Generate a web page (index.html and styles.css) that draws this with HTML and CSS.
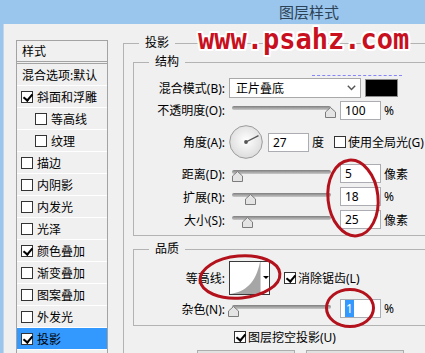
FILE: index.html
```html
<!DOCTYPE html>
<html lang="zh-CN">
<head>
    <meta charset="UTF-8" />
    <title>图层样式</title>
    <link rel="stylesheet" href="styles.css">
</head>
<body>

<div class="window">
    <div class="title">图层样式</div>

    <div class="content">
        <!-- Lista de estilos -->
        <ul class="styles-list">
            <li class="list-head">样式</li>
            <li class="blend-opt">混合选项:默认</li>
            <li><span class="check on"></span>斜面和浮雕</li>
            <li class="sub"><span class="check"></span>等高线</li>
            <li class="sub"><span class="check"></span>纹理</li>
            <li><span class="check"></span>描边</li>
            <li><span class="check"></span>内阴影</li>
            <li><span class="check"></span>内发光</li>
            <li><span class="check"></span>光泽</li>
            <li><span class="check on"></span>颜色叠加</li>
            <li><span class="check"></span>渐变叠加</li>
            <li><span class="check"></span>图案叠加</li>
            <li><span class="check"></span>外发光</li>
            <li class="selected"><span class="check on"></span>投影</li>
        </ul>

        <div class="panel">
            <fieldset class="group-outer">
                <legend>投影</legend>

                <fieldset class="group-inner">
                    <legend>结构</legend>
                    <div class="rows struct">
                        <div class="row r-blend">
                            <label>混合模式(B):</label>
                            <div class="select">
                                <span>正片叠底</span>
                                <svg width="9" height="6" viewBox="0 0 9 6"><polyline points="0.8,0.8 4.5,4.6 8.2,0.8" fill="none" stroke="#555" stroke-width="1.4"/></svg>
                            </div>
                            <span class="swatch"></span>
                        </div>
                        <div class="row r-opacity">
                            <label>不透明度(O):</label>
                            <div class="slider">
                                <div class="track"></div>
                                <svg class="thumb" style="left: 99%" width="11" height="11" viewBox="0 0 11 11"><path d="M0.5 5 L5.5 0.5 L10.5 5 V10.5 H0.5 Z" fill="#e4e4e4" stroke="#7c7c7c"/></svg>
                            </div>
                            <span class="num">100</span>
                            <span class="unit">%</span>
                        </div>
                        <div class="row r-angle">
                            <label>角度(A):</label>
                            <svg class="dial" width="34" height="34" viewBox="0 0 34 34">
                                <defs>
                                    <radialGradient id="dialBg" cx="50%" cy="45%" r="55%">
                                        <stop offset="0" stop-color="#ffffff"/>
                                        <stop offset="1" stop-color="#dcdcdc"/>
                                    </radialGradient>
                                </defs>
                                <circle cx="17" cy="17" r="16.3" fill="url(#dialBg)" stroke="#9b9b9b"/>
                                <line x1="17" y1="17" x2="29.5" y2="10.6" stroke="#555" stroke-width="1.3"/>
                                <circle cx="17" cy="17" r="1.9" fill="#555"/>
                            </svg>
                            <span class="num angle">27</span>
                            <span class="unit">度</span>
                            <span class="check global"></span>
                            <span class="check-text">使用全局光(G)</span>
                        </div>
                        <div class="row">
                            <label>距离(D):</label>
                            <div class="slider">
                                <div class="track"></div>
                                <svg class="thumb" style="left: 6%" width="11" height="11" viewBox="0 0 11 11"><path d="M0.5 5 L5.5 0.5 L10.5 5 V10.5 H0.5 Z" fill="#e4e4e4" stroke="#7c7c7c"/></svg>
                            </div>
                            <span class="num">5</span>
                            <span class="unit">像素</span>
                        </div>
                        <div class="row">
                            <label>扩展(R):</label>
                            <div class="slider">
                                <div class="track"></div>
                                <svg class="thumb" style="left: 19%" width="11" height="11" viewBox="0 0 11 11"><path d="M0.5 5 L5.5 0.5 L10.5 5 V10.5 H0.5 Z" fill="#e4e4e4" stroke="#7c7c7c"/></svg>
                            </div>
                            <span class="num">18</span>
                            <span class="unit">%</span>
                        </div>
                        <div class="row">
                            <label>大小(S):</label>
                            <div class="slider">
                                <div class="track"></div>
                                <svg class="thumb" style="left: 16%" width="11" height="11" viewBox="0 0 11 11"><path d="M0.5 5 L5.5 0.5 L10.5 5 V10.5 H0.5 Z" fill="#e4e4e4" stroke="#7c7c7c"/></svg>
                            </div>
                            <span class="num">25</span>
                            <span class="unit">像素</span>
                        </div>
                    </div>
                </fieldset>

                <fieldset class="group-inner group-quality">
                    <legend>品质</legend>
                    <div class="rows quality">
                        <div class="row r-contour">
                            <label>等高线:</label>
                            <div class="contour">
                                <svg width="30" height="32" viewBox="0 0 30 32"><path d="M0 32 C16 30 26 20 30 0 L30 32 Z" fill="#a6a6a6"/></svg>
                                <span class="contour-arrow"></span>
                            </div>
                            <span class="check on aa"></span>
                            <span class="check-text">消除锯齿(L)</span>
                        </div>
                        <div class="row">
                            <label>杂色(N):</label>
                            <div class="slider">
                                <div class="track"></div>
                                <svg class="thumb" style="left: 2%" width="11" height="11" viewBox="0 0 11 11"><path d="M0.5 5 L5.5 0.5 L10.5 5 V10.5 H0.5 Z" fill="#e4e4e4" stroke="#7c7c7c"/></svg>
                            </div>
                            <span class="num"><span class="sel">1</span></span>
                            <span class="unit">%</span>
                        </div>
                    </div>
                </fieldset>

                <div class="row knockout">
                    <span class="check on"></span>
                    <span class="check-text">图层挖空投影(U)</span>
                </div>

                <!-- só a borda de cima aparece -->
                <div class="buttons">
                    <span class="btn"></span>
                    <span class="btn"></span>
                </div>
            </fieldset>
        </div>
    </div>

    <!-- Marcas por cima -->
    <div class="watermark">www.psahz.com</div>
    <div class="blue-mark"></div>
    <svg class="marks" width="425" height="353" viewBox="0 0 425 353">
        <ellipse cx="353" cy="198" rx="25" ry="38" transform="rotate(-6 353 198)" fill="none" stroke="#b3121c" stroke-width="3"/>
        <ellipse cx="240" cy="277" rx="40" ry="21" transform="rotate(-5 240 277)" fill="none" stroke="#b3121c" stroke-width="3"/>
        <ellipse cx="350" cy="308" rx="23.5" ry="18.5" fill="none" stroke="#b3121c" stroke-width="3"/>
    </svg>
</div>

</body>
</html>
```

FILE: styles.css
```css
/* Reset básico */
* {
    box-sizing: border-box;
}

body {
    margin: 0;
    overflow: hidden;
    background: #f0f0f0;
    font-family: "Noto Sans", "Noto Sans CJK SC", sans-serif;
    font-size: 12px;
    color: #000;
}

/* a janela é mais larga que a captura, por isso corta */
.window {
    position: relative;
    width: 425px;
    height: 353px;
    overflow: hidden;
    background: #9ac5ec;
}

.title {
    width: 618px;
    height: 24px;
    line-height: 24px;
    text-align: center;
    font-size: 15px;
    color: #2c4257;
}

.content {
    display: flex;
    align-items: flex-start;
    width: 614px;
    height: 329px;
    margin-left: 3px;
    padding: 11px 0 0 12px;
    background: #f0f0f0;
    border-left: 1px solid #c6d5e4;
}

/* Lista da esquerda */
.styles-list {
    width: 92px;
    height: 330px;
    margin: 5px 0 0;
    padding: 0;
    list-style: none;
    border: 1px solid #a3a3a3;
    background: #f0f0f0;
    flex: none;
}

.styles-list li {
    display: flex;
    align-items: center;
    gap: 4px;
    height: 22px;
    padding-left: 4px;
    border-bottom: 1px solid #fff;
    white-space: nowrap;
}

.styles-list .list-head {
    height: 23px;
    padding-left: 5px;
    border-bottom: 3px double #a3a3a3;
}

.styles-list .blend-opt {
    padding-left: 5px;
}

.styles-list .sub {
    padding-left: 18px;
}

.styles-list .selected {
    background: #3399ff;
}

/* Checkbox */
.check {
    position: relative;
    display: inline-block;
    width: 12px;
    height: 12px;
    border: 1px solid #333;
    background: #fff;
    flex: none;
}

.check.on::after {
    content: "";
    position: absolute;
    left: 3px;
    top: 0;
    width: 4px;
    height: 7px;
    border: solid #000;
    border-width: 0 2px 2px 0;
    transform: rotate(40deg);
}

.check-text {
    margin-left: 2px;
    white-space: nowrap;
}

/* Painel da direita */
.panel {
    margin-left: 15px;
    width: 420px;
    flex: none;
}

fieldset {
    margin: 0;
    padding: 0;
    min-width: 0;
    border: 1px solid #b3b3b3;
}

legend {
    margin-left: 15px;
    padding: 0 6px;
    line-height: 16px;
}

.group-outer {
    height: 330px;
}

.group-inner {
    margin: 3px 0 0 9px;
}

.group-quality {
    margin-top: 5px;
}

.rows.struct {
    padding: 8px 0 4px;
}

.rows.quality {
    padding: 2px 0 5px;
}

.row {
    display: flex;
    align-items: center;
    height: 23px;
    white-space: nowrap;
}

.row label {
    width: 91px;
    margin-right: 4px;
    text-align: right;
    flex: none;
}

.r-blend { height: 20px; }
.r-opacity { height: 24px; }
.r-angle { height: 40px; }
.r-contour { height: 38px; }

.select {
    display: flex;
    align-items: center;
    justify-content: space-between;
    width: 132px;
    height: 20px;
    padding: 0 4px 0 6px;
    border: 1px solid #a9a9a9;
    background: #fff;
}

.swatch {
    width: 33px;
    height: 18px;
    margin-left: 4px;
    border: 1px solid #8c8c8c;
    background: #000;
}

/* Sliders */
.slider {
    position: relative;
    width: 99px;
    height: 14px;
    margin-left: 3px;
    padding-top: 3px;
    flex: none;
}

.track {
    height: 4px;
    border-radius: 2px;
    background: linear-gradient(#7e7e7e, #c9c9c9);
}

.thumb {
    position: absolute;
    top: 4px;
    margin-left: -5.5px;
}

.num {
    width: 41px;
    height: 19px;
    margin-left: 9px;
    padding-left: 4px;
    line-height: 17px;
    border: 1px solid #abadb3;
    background: #fff;
    flex: none;
}

.num .sel {
    background: #3399ff;
    color: #fff;
    padding: 0 1px;
}

.unit {
    margin-left: 3px;
}

.dial {
    flex: none;
}

.num.angle {
    margin-left: 5px;
}

.check.global {
    margin-left: 10px;
}

/* Contorno */
.contour {
    display: flex;
    width: 41px;
    height: 34px;
    border: 1px solid #3a3a3a;
    background: #fff;
    flex: none;
}

.contour svg {
    display: block;
}

.contour-arrow {
    position: relative;
    flex: 1;
    border-left: 1px solid #d0d0d0;
}

.contour-arrow::after {
    content: "";
    position: absolute;
    left: 2px;
    top: 14px;
    border: 3px solid transparent;
    border-top: 3px solid #000;
}

.check.aa {
    margin-left: 14px;
}

.knockout {
    height: 22px;
    margin-left: 110px;
}

.buttons {
    display: flex;
    gap: 11px;
    margin: 2px 0 0 73px;
}

.btn {
    width: 98px;
    height: 22px;
    border: 1px solid #adadad;
    background: #e1e1e1;
}

/* Marca d'água e círculos */
.watermark {
    position: absolute;
    left: 198px;
    top: 26px;
    font-family: "DejaVu Sans Mono", monospace;
    font-weight: bold;
    font-size: 27px;
    line-height: 27px;
    color: #c8101e;
    transform: scaleY(1.08);
    transform-origin: 0 23px;
    text-shadow: 2px 0 #fff, -2px 0 #fff, 0 2px #fff, 0 -2px #fff,
                 1.5px 1.5px #fff, -1.5px -1.5px #fff, 1.5px -1.5px #fff, -1.5px 1.5px #fff;
}

.blue-mark {
    position: absolute;
    left: 312px;
    top: 75px;
    width: 90px;
    border-top: 1px dashed #5a5aff;
    opacity: 0.7;
}

.marks {
    position: absolute;
    left: 0;
    top: 0;
    pointer-events: none;
}
```
